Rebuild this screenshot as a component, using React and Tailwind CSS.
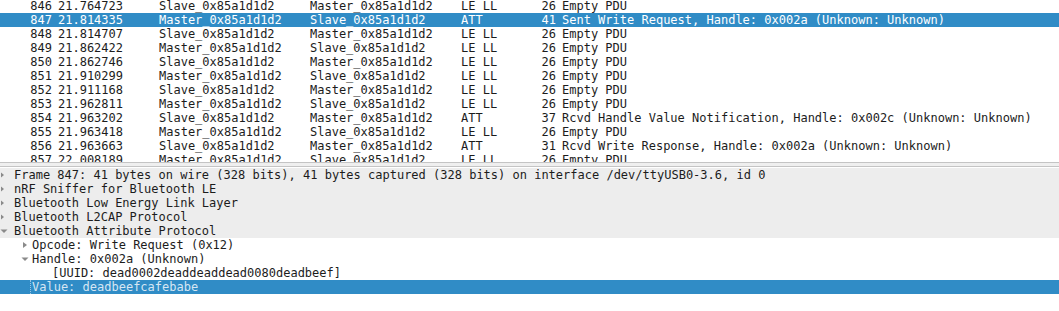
const PACKETS = [
  ['846', '21.764723', 'Slave_0x85a1d1d2', 'Master_0x85a1d1d2', 'LE LL', '26', 'Empty PDU'],
  ['847', '21.814335', 'Master_0x85a1d1d2', 'Slave_0x85a1d1d2', 'ATT', '41', 'Sent Write Request, Handle: 0x002a (Unknown: Unknown)'],
  ['848', '21.814707', 'Slave_0x85a1d1d2', 'Master_0x85a1d1d2', 'LE LL', '26', 'Empty PDU'],
  ['849', '21.862422', 'Master_0x85a1d1d2', 'Slave_0x85a1d1d2', 'LE LL', '26', 'Empty PDU'],
  ['850', '21.862746', 'Slave_0x85a1d1d2', 'Master_0x85a1d1d2', 'LE LL', '26', 'Empty PDU'],
  ['851', '21.910299', 'Master_0x85a1d1d2', 'Slave_0x85a1d1d2', 'LE LL', '26', 'Empty PDU'],
  ['852', '21.911168', 'Slave_0x85a1d1d2', 'Master_0x85a1d1d2', 'LE LL', '26', 'Empty PDU'],
  ['853', '21.962811', 'Master_0x85a1d1d2', 'Slave_0x85a1d1d2', 'LE LL', '26', 'Empty PDU'],
  ['854', '21.963202', 'Slave_0x85a1d1d2', 'Master_0x85a1d1d2', 'ATT', '37', 'Rcvd Handle Value Notification, Handle: 0x002c (Unknown: Unknown)'],
  ['855', '21.963418', 'Master_0x85a1d1d2', 'Slave_0x85a1d1d2', 'LE LL', '26', 'Empty PDU'],
  ['856', '21.963663', 'Slave_0x85a1d1d2', 'Master_0x85a1d1d2', 'ATT', '31', 'Rcvd Write Response, Handle: 0x002a (Unknown: Unknown)'],
  ['857', '22.008189', 'Master_0x85a1d1d2', 'Slave_0x85a1d1d2', 'LE LL', '26', 'Empty PDU'],
]

const TREE = [
  { text: 'Frame 847: 41 bytes on wire (328 bits), 41 bytes captured (328 bits) on interface /dev/ttyUSB0-3.6, id 0', level: 0, arrow: 'right' },
  { text: 'nRF Sniffer for Bluetooth LE', level: 0, arrow: 'right' },
  { text: 'Bluetooth Low Energy Link Layer', level: 0, arrow: 'right' },
  { text: 'Bluetooth L2CAP Protocol', level: 0, arrow: 'right' },
  { text: 'Bluetooth Attribute Protocol', level: 0, arrow: 'down' },
  { text: 'Opcode: Write Request (0x12)', level: 1, arrow: 'right' },
  { text: 'Handle: 0x002a (Unknown)', level: 1, arrow: 'down' },
  { text: '[UUID: dead0002deaddeaddead0080deadbeef]', level: 2 },
  { text: 'Value: deadbeefcafebabe', level: 1, selected: true },
]

const Arrow = ({ dir, small }) =>
  dir === 'right' ? (
    <svg width="6" height="8" viewBox="0 0 6 8" className="block">
      <path d={small ? 'M1 1.5 L4 4 L1 6.5 Z' : 'M1 1 L5 4 L1 7 Z'} fill="#8a8a8a" />
    </svg>
  ) : (
    <svg width="8" height="6" viewBox="0 0 8 6" className="block">
      <path d="M0.5 1.5 L7.5 1.5 L4 5 Z" fill="#8a8a8a" />
    </svg>
  )

const PacketRow = ({ p, selected }) => (
  <div
    className={`flex h-[14px] items-center whitespace-pre ${
      selected ? 'bg-[#308cc6] text-white' : 'text-[#1c1c1c]'
    }`}
  >
    <span className="w-[52px] shrink-0 text-right">{p[0]}</span>
    <span className="ml-[6px] w-[101px] shrink-0">{p[1]}</span>
    <span className="w-[151px] shrink-0">{p[2]}</span>
    <span className="w-[151px] shrink-0">{p[3]}</span>
    <span className="w-[40px] shrink-0">{p[4]}</span>
    <span className="w-[55px] shrink-0 text-right">{p[5]}</span>
    <span className="ml-[6px]">{p[6]}</span>
  </div>
)

const TreeRow = ({ row }) => {
  const indent = ['pl-0', 'pl-[18px]', 'pl-[38px]'][row.level]
  const bg = row.selected ? 'bg-[#308cc6]' : row.level === 0 ? 'bg-[#ededed]' : ''
  return (
    <div className={`flex h-[14px] items-center whitespace-pre ${bg} ${indent}`}>
      <span className={`flex w-[14px] shrink-0 items-center ${row.level === 0 ? 'justify-start' : 'justify-center'}`}>
        {row.arrow && <Arrow dir={row.arrow} small={row.level === 0} />}
      </span>
      {row.selected ? (
        <span className="-ml-[2px] flex-1 border-l border-dotted border-[#9cc6e4] pl-[1px] text-[#d6e6f3]">
          {row.text}
        </span>
      ) : (
        <span className="text-[#1c1c1c]">{row.text}</span>
      )}
    </div>
  )
}

export default function App() {
  return (
    <div className="h-[311px] w-[1059px] overflow-hidden bg-white font-['DejaVu_Sans_Mono',monospace] text-[12px] leading-[14px]">
      <div className="h-[162px] overflow-hidden">
        <div className="-mt-px">
          {PACKETS.map((p) => (
            <PacketRow key={p[0]} p={p} selected={p[0] === '847'} />
          ))}
        </div>
      </div>
      <div className="h-[5px] border-y border-[#c4c4c4] bg-[#efefef]" />
      <div className="pt-px">
        {TREE.map((row) => (
          <TreeRow key={row.text} row={row} />
        ))}
      </div>
    </div>
  )
}
